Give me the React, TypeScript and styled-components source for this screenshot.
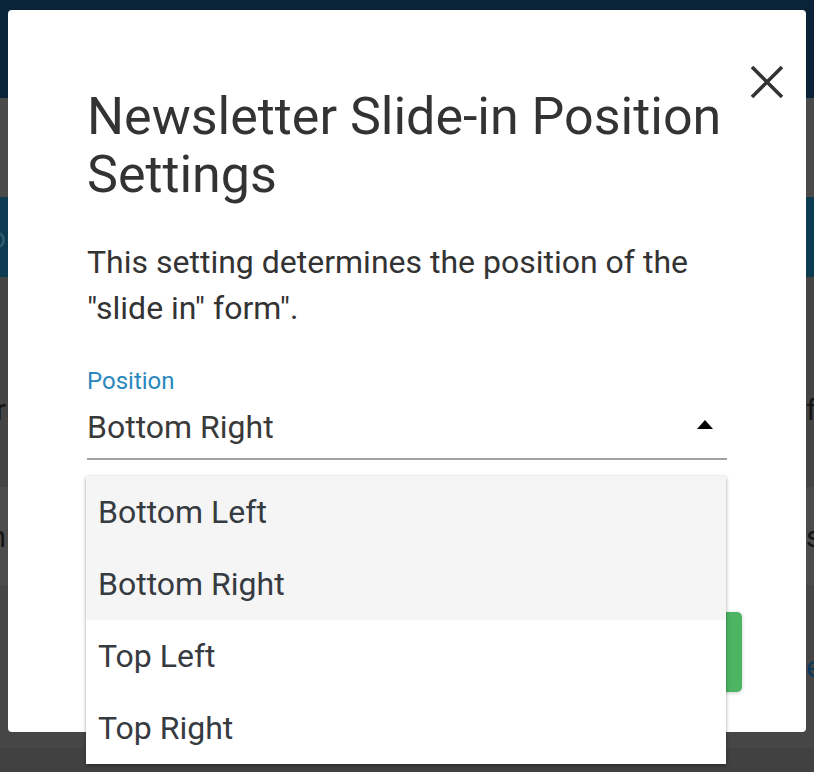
import React from 'react';
import styled, { createGlobalStyle } from 'styled-components';

const GlobalStyle = createGlobalStyle`
  html, body {
    margin: 0;
    padding: 0;
  }

  body {
    font-family: Roboto, "Liberation Sans", Arial, sans-serif;
    background: #464646;
    overflow: hidden;
  }
`;

const OPTIONS = ['Bottom Left', 'Bottom Right', 'Top Left', 'Top Right'];

function CloseIcon() {
  return (
    <svg width="34" height="34" viewBox="0 0 34 34" aria-hidden="true">
      <path d="M2 2 L32 32 M32 2 L2 32" stroke="#333" strokeWidth="3.6" fill="none" />
    </svg>
  );
}

export default function App() {
  const selected = 'Bottom Right';
  const hovered = 'Bottom Left';

  return (
    <>
      <GlobalStyle />
      {/* the page behind the dialog, dimmed */}
      <Backdrop>
        <TopBar />
        <Band $h={99} $bg="#4a4a4a" />
        <Band $h={80} $bg="#0c3b52">
          <Peek $side="left" $color="#2d5b71">Go</Peek>
        </Band>
        <Band $h={210} $bg="#444444" $pad={115}>
          <Peek $side="left" $color="#151515">Colour</Peek>
          <Peek $side="right" $color="#151515">form</Peek>
        </Band>
        <Band $h={98} $bg="#4c4c4c">
          <Peek $side="left" $color="#151515">Custom design</Peek>
          <Peek $side="right" $color="#151515">settings</Peek>
        </Band>
        <Band $h={163} $bg="#464646">
          <span />
          <Peek $side="right" $color="#0d3a5c">edit</Peek>
        </Band>
        <Band $h={24} $bg="#414141" />
      </Backdrop>

      <Modal role="dialog" aria-modal="true">
        <CloseButton aria-label="Close" type="button">
          <CloseIcon />
        </CloseButton>

        <Title>Newsletter Slide-in Position Settings</Title>
        <Description>
          This setting determines the position of the "slide in" form".
        </Description>

        <Field>
          <FieldLabel>Position</FieldLabel>
          <SelectBox>
            <span>{selected}</span>
            <Caret />
          </SelectBox>
        </Field>

        <Footer>
          <SaveButton type="button">Save</SaveButton>
        </Footer>

        <Menu role="listbox">
          {OPTIONS.map((option) => (
            <MenuItem
              key={option}
              role="option"
              aria-selected={option === selected}
              $active={option === selected || option === hovered}
            >
              {option}
            </MenuItem>
          ))}
        </Menu>
      </Modal>
    </>
  );
}

const Backdrop = styled.div`
  display: flex;
  flex-direction: column;

  width: 814px;
  height: 772px;
  overflow: hidden;
`;

const TopBar = styled.div`
  flex-shrink: 0;
  height: 98px;
  background: #0b2338;
`;

const Band = styled.div<{ $h: number; $bg: string; $pad?: number }>`
  display: flex;
  justify-content: space-between;
  align-items: ${(p) => (p.$pad ? 'flex-start' : 'center')};
  flex-shrink: 0;

  box-sizing: border-box;
  height: ${(p) => p.$h}px;
  padding-top: ${(p) => p.$pad ?? 0}px;
  background: ${(p) => p.$bg};
`;

const Peek = styled.span<{ $side: 'left' | 'right'; $color: string }>`
  display: flex;
  justify-content: ${(p) => (p.$side === 'left' ? 'flex-end' : 'flex-start')};

  width: ${(p) => (p.$side === 'left' ? '6px' : '8px')};
  overflow: hidden;

  white-space: nowrap;
  color: ${(p) => p.$color};
  font-size: 30px;
`;

const Modal = styled.div`
  position: fixed;
  top: 10px;
  left: 8px;

  display: flex;
  flex-direction: column;

  box-sizing: border-box;
  width: 798px;
  height: 722px;
  padding: 78px 79px 0;

  background: #fff;
  border-radius: 4px;
`;

const CloseButton = styled.button`
  position: absolute;
  top: 55px;
  right: 22px;

  display: flex;
  padding: 0;

  border: none;
  background: transparent;
  cursor: pointer;
`;

const Title = styled.h2`
  margin: 0;

  color: #333;
  font-size: 52px;
  font-weight: 400;
  line-height: 58px;
`;

const Description = styled.p`
  margin: 35px 0 0;

  color: #333;
  font-size: 32px;
  line-height: 46px;
`;

const Field = styled.div`
  display: flex;
  flex-direction: column;

  margin-top: 35px;
`;

const FieldLabel = styled.label`
  color: #2b88bd;
  font-size: 24px;
  line-height: 30px;
`;

const SelectBox = styled.div`
  display: flex;
  justify-content: space-between;
  align-items: center;

  height: 62px;
  padding-right: 14px;

  border-bottom: 2px solid #a2a2a2;
  color: #3a3a3a;
  font-size: 32px;
`;

const Caret = styled.span`
  width: 0;
  height: 0;
  margin-bottom: 6px;

  border-left: 8px solid transparent;
  border-right: 8px solid transparent;
  border-bottom: 9px solid #000;
`;

const Footer = styled.div`
  display: flex;
  justify-content: flex-end;

  margin: auto -15px 40px 0;
`;

const SaveButton = styled.button`
  width: 220px;
  height: 80px;

  border: none;
  border-radius: 5px;
  background: #4cb462;
  box-shadow: 0 1px 4px rgba(0, 0, 0, 0.2);
  color: #fff;
  font-family: inherit;
  font-size: 28px;
`;

const Menu = styled.ul`
  position: absolute;
  top: 466px;
  left: 78px;

  width: 640px;
  margin: 0;
  padding: 0;

  list-style: none;
  background: #fff;
  box-shadow: 0 2px 4px rgba(0, 0, 0, 0.3), 0 0 2px rgba(0, 0, 0, 0.1);
`;

const MenuItem = styled.li<{ $active: boolean }>`
  display: flex;
  align-items: center;

  height: 72px;
  padding-left: 12px;

  background: ${(p) => (p.$active ? '#f5f5f5' : '#fff')};
  color: #363b42;
  font-size: 32px;
  cursor: pointer;
`;
